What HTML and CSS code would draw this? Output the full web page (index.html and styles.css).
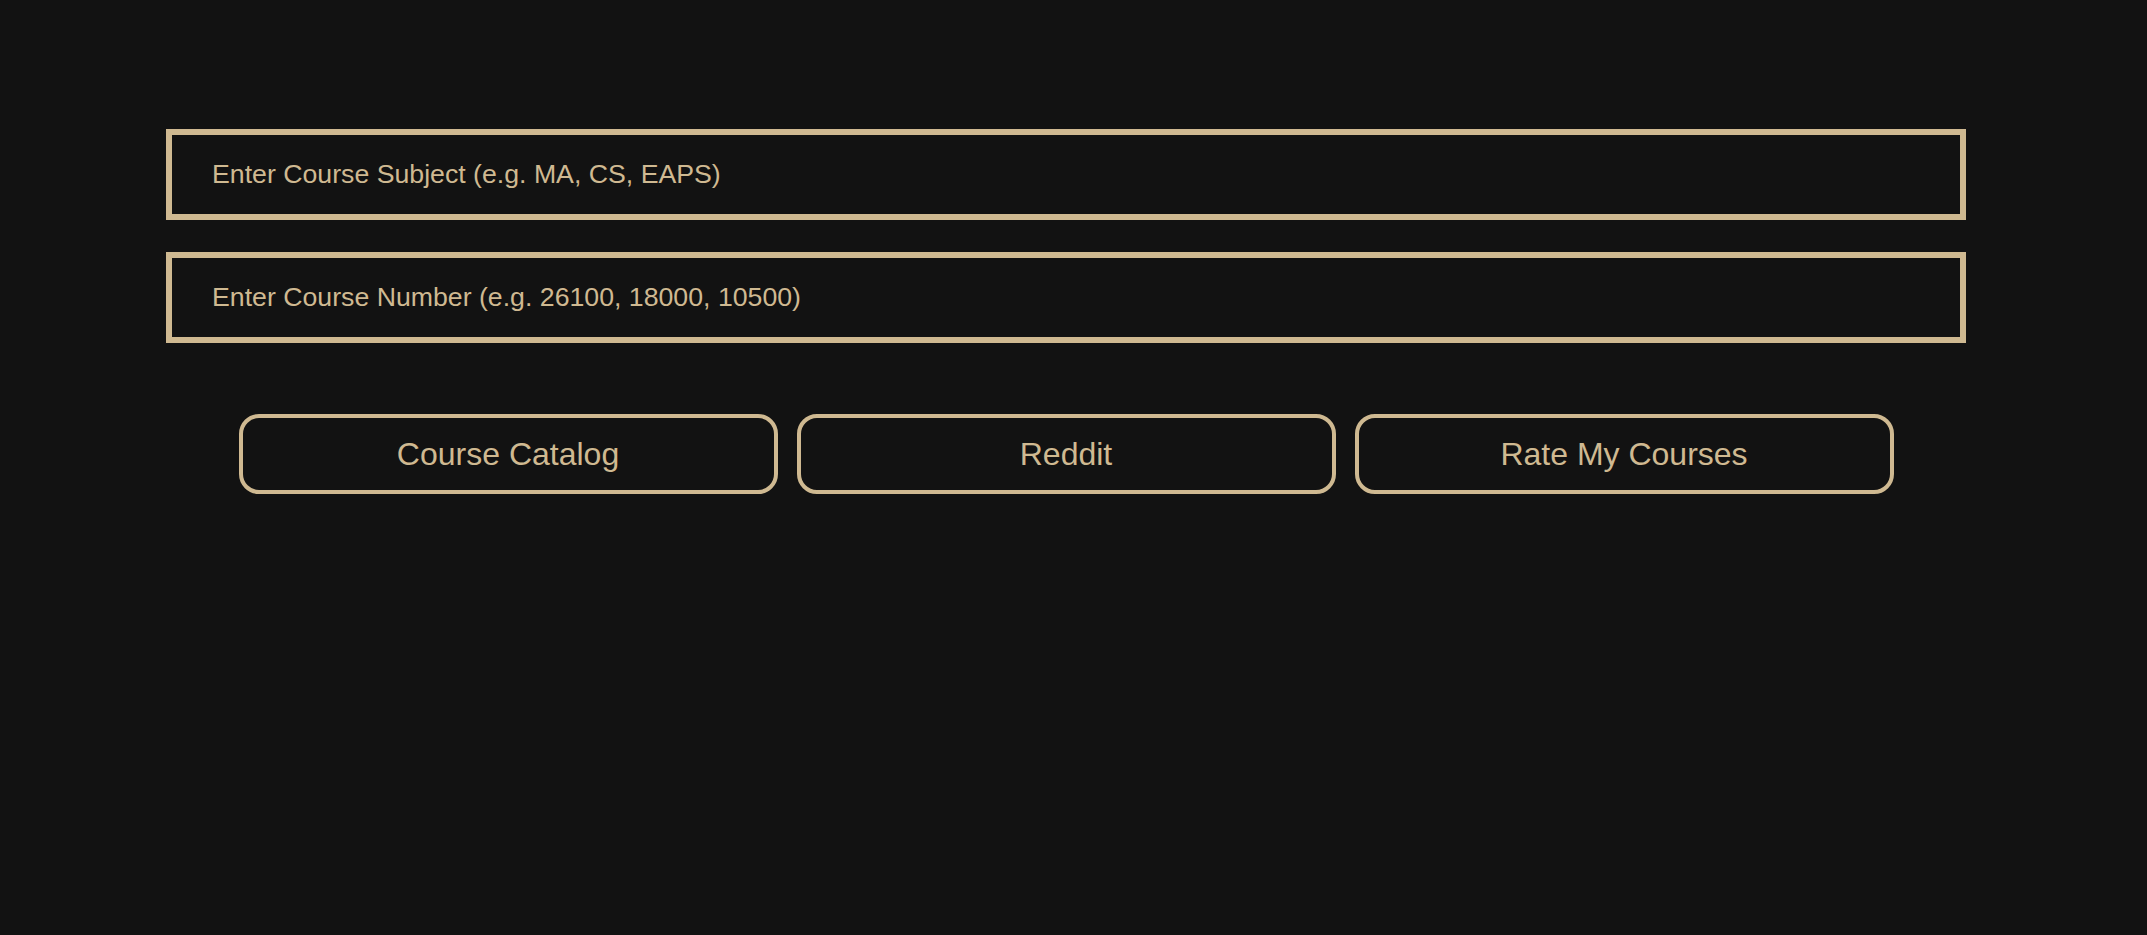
FILE: index.html
```html
<!DOCTYPE html>
<html lang="en">
<head>
<meta charset="utf-8">
<title>Course Lookup</title>
<link rel="stylesheet" href="styles.css">
</head>
<body>
  <main class="page">
    <form class="search">
      <input class="field" type="text" placeholder="Enter Course Subject (e.g. MA, CS, EAPS)">
      <input class="field" type="text" placeholder="Enter Course Number (e.g. 26100, 18000, 10500)">
    </form>
    <div class="links">
      <button class="link-btn" type="button">Course Catalog</button>
      <button class="link-btn" type="button">Reddit</button>
      <button class="link-btn" type="button">Rate My Courses</button>
    </div>
  </main>
</body>
</html>
```

FILE: styles.css
```css
html, body {
  margin: 0;
  padding: 0;
  background: #121212;
  height: 100%;
}

body {
  font-family: "Liberation Sans", Arial, sans-serif;
  color: #cfb991;
}

.page {
  box-sizing: border-box;
  width: 2132px;
  padding-top: 129px;
  display: flex;
  flex-direction: column;
  align-items: center;
}

.search {
  display: flex;
  flex-direction: column;
  gap: 32px;
  margin: 0;
}

.field {
  box-sizing: border-box;
  width: 1800px;
  height: 91px;
  margin: 0;
  padding: 0 40px;
  border: 6px solid #cfb991;
  border-radius: 0;
  background: #121212;
  color: #cfb991;
  font-family: "Liberation Sans", Arial, sans-serif;
  font-size: 26.7px;
  outline: none;
}

.field::placeholder {
  color: #cfb991;
  opacity: 1;
}

.links {
  display: flex;
  gap: 19px;
  margin-top: 71px;
}

.link-btn {
  box-sizing: border-box;
  width: 539px;
  height: 80px;
  margin: 0;
  padding: 0;
  border: 4px solid #cfb991;
  border-radius: 20px;
  background: #121212;
  color: #cfb991;
  font-family: "Liberation Sans", Arial, sans-serif;
  font-size: 32px;
  cursor: pointer;
}
```
